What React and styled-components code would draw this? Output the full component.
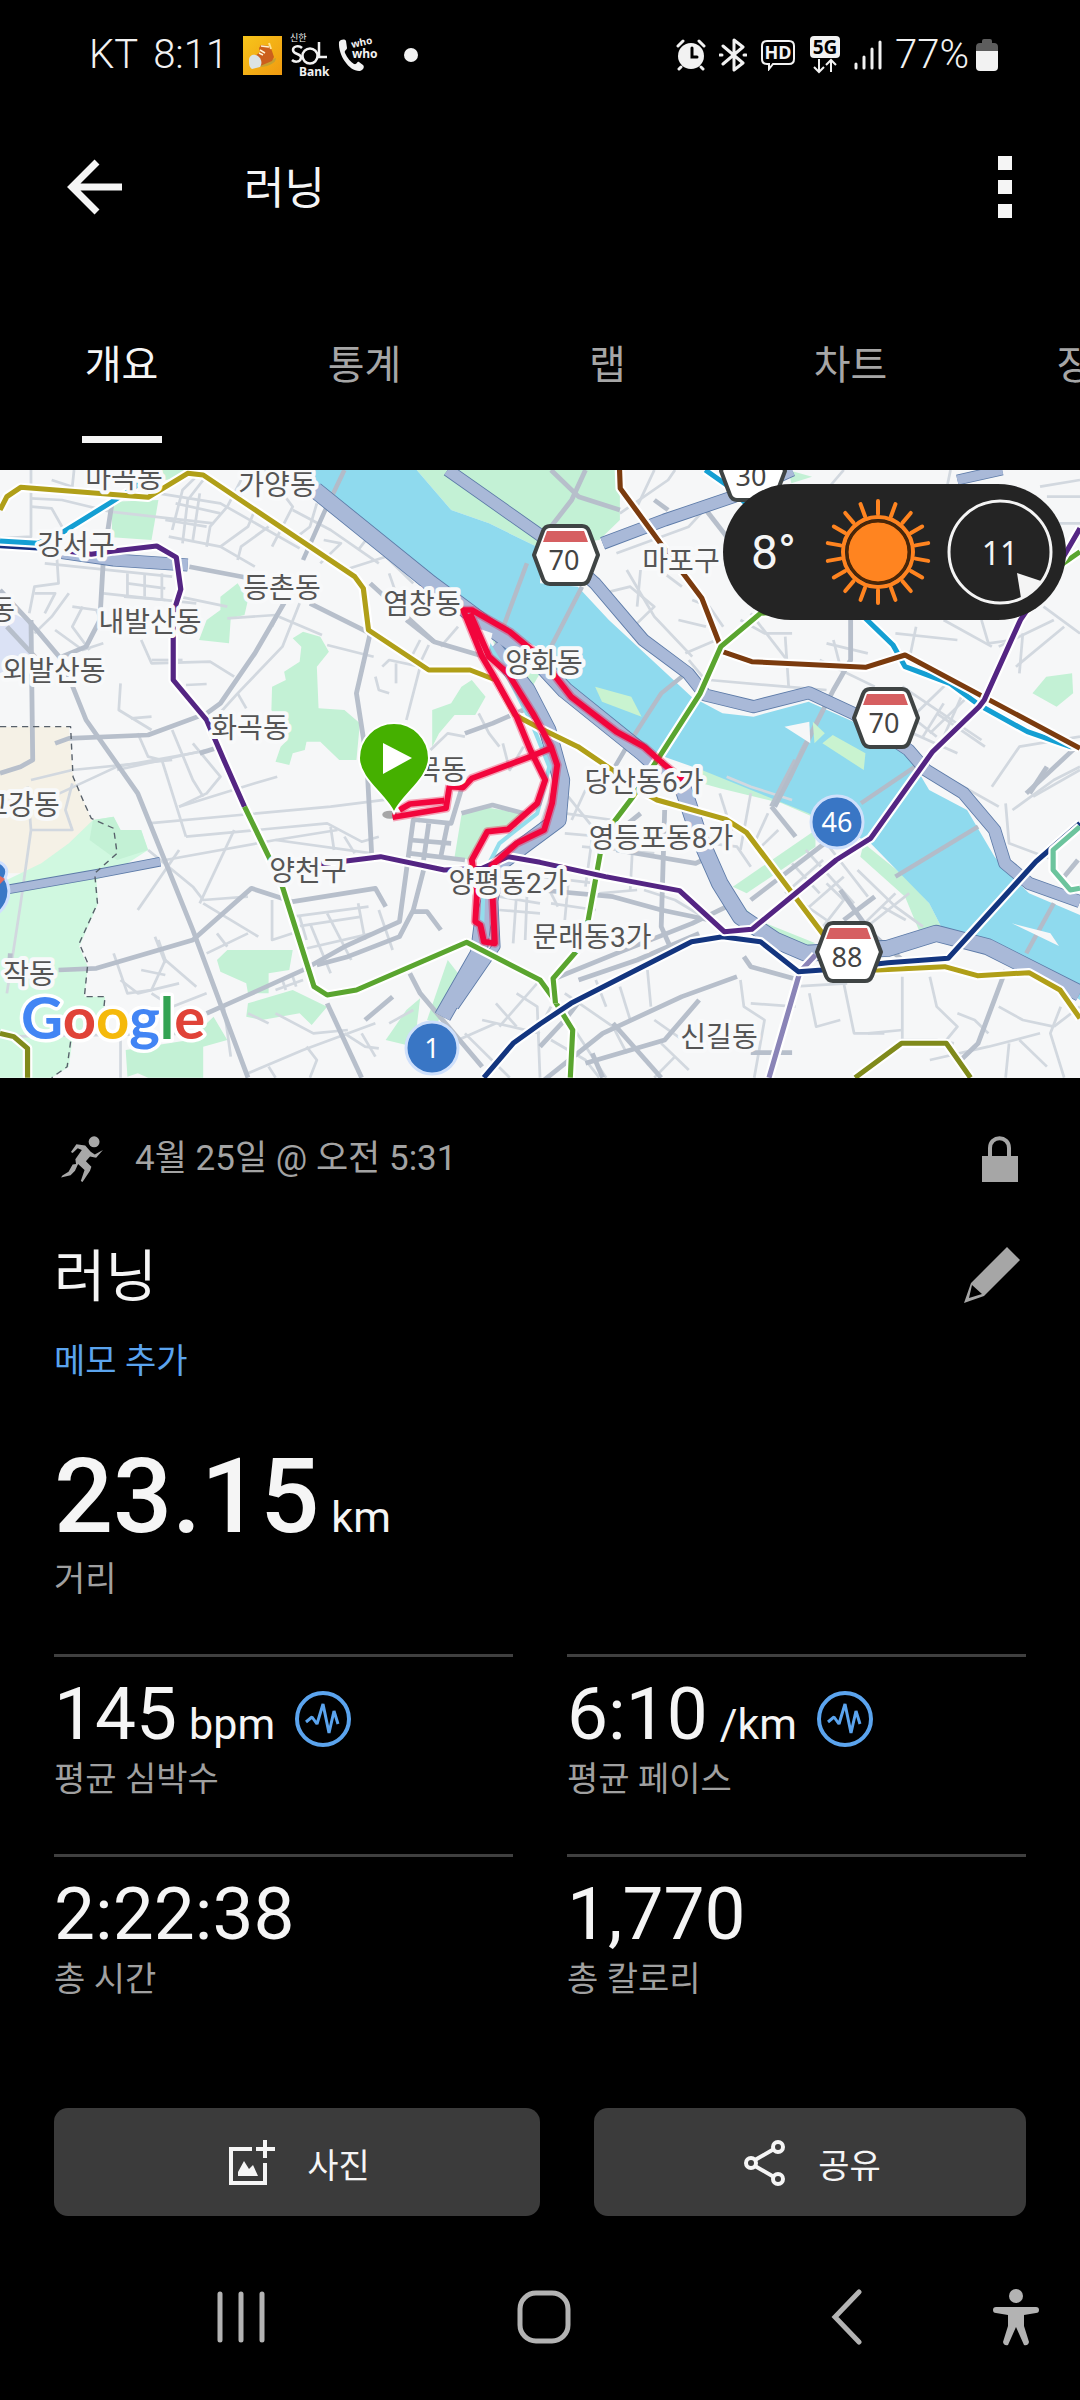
import React from "react";
//Styling
import styled, { createGlobalStyle } from "styled-components";

//Map data, in terrain units (3136 x 1824)
const parks = [
  "1210,30 1800,30 1800,180 1740,240 1568,265 1420,190 1310,150",
  "325,125 460,120 440,240 325,232",
  "470,30 560,30 540,50 480,60",
  "640,410 690,370 720,420 710,465 670,475 665,550 578,540 600,480 640,450",
  "850,535 880,515 930,530 955,575 920,620 925,745 1000,750 1045,790 1035,900 985,900 930,845 890,845 885,870 850,880 840,915 800,905 815,860 835,840 788,750 790,680 830,660 825,635 870,605 875,560",
  "1255,750 1310,730 1340,680 1370,660 1410,710 1380,765 1320,765 1275,820 1255,860",
  "630,1500 660,1470 850,1470 840,1530 780,1540 780,1600 720,1600 715,1570 640,1535",
  "720,1630 850,1590 950,1640 905,1695 870,1660 760,1680 715,1670",
  "620,1670 660,1740 590,1760 590,1853 430,1853 400,1840 370,1850 365,1770 550,1740",
  "1180,1650 1220,1615 1210,1700 1180,1755 1120,1740",
  "1340,1065 1400,1040 1520,1060 1500,1100 1420,1105 1365,1200 1320,1190",
  "2038,910 2170,960 2370,1030 2370,1075 2270,1030 2090,985 2038,970",
  "2508,1150 2628,1250 2698,1330 2733,1400 2668,1410 2628,1310 2498,1190",
  "2128,1280 2368,1110 2368,1160 2168,1300",
  "2148,1330 2200,1380 2368,1450 2328,1460 2188,1400",
  "2288,30 2358,50 2298,70",
  "2998,700 3038,650 3113,640 3116,700 3068,740",
  "1600,640 1668,690 1850,850 1900,890 1860,870 1660,720",
  "1430,540 1568,640 1540,690 1450,590",
  "1300,1500 1330,1540 1270,1690 1240,1680",
];

const lightParks = [
  "0,1270 120,1210 200,1150 270,1080 330,1070 350,1110 410,1110 430,1170 340,1230 280,1260 285,1330 230,1460 255,1520 245,1610 305,1610 300,1690 210,1740 200,1820 150,1853 0,1853",
];

const islands = [
  "1728,680 1833,710 1863,770 1748,725",
  "2418,825 2513,880 2508,930 2388,850",
  "2360,785 2395,820 2365,850",
];

const sandbanks = ["2278,800 2350,785 2353,850", "2938,1390 3050,1420 3075,1458"];

const river =
  "905,30 1210,30 1310,150 1420,190 1568,265 1568,370 1678,380 1768,480 2008,710 2098,760 2188,770 2348,725 2478,785 2618,870 2658,920 2698,990 2808,1050 2888,1190 2938,1250 2988,1300 3136,1365 3136,1620 2968,1490 2818,1430 2733,1400 2698,1330 2528,1150 2348,1060 2038,930 1900,880 1850,850 1668,690 1613,640 1560,560 1440,510 1360,490 1270,385 930,100";

const streets = [
  "90,30 90,230 0,235", "90,115 180,120 320,155", "150,60 210,80 215,30", "90,140 150,145 180,200",
  "460,100 640,130 870,265", "320,155 620,190", "490,230 640,260 740,320", "500,210 530,90 570,50",
  "530,250 545,120 590,60", "560,240 580,100", "600,260 610,200 660,140 700,60", "510,130 640,160",
  "480,180 600,200", "640,260 720,200 740,150", "690,300 700,260 780,200", "850,240 900,200 920,130",
  "770,30 850,140 820,200 790,260", "850,150 960,210 1100,310", "940,240 990,250 930,310",
  "1040,270 1070,230", "1000,330 1120,290 1200,370", "1130,340 1150,400", "130,310 500,350",
  "165,290 170,370 100,380 85,460", "370,340 370,410", "420,340 420,410", "470,340 470,420",
  "370,370 480,385", "300,400 570,430", "520,410 660,440", "360,410 480,420",
  "200,400 150,470 100,520", "100,400 160,400 130,460", "210,440 280,450 300,500",
  "160,510 240,570 300,550", "240,440 210,500 260,570", "410,540 440,610 610,605 680,650",
  "440,600 530,600", "350,670 345,750 440,810", "380,775 440,770", "540,675 600,672",
  "660,475 800,465", "810,470 935,525", "820,430 790,500", "870,430 820,560 690,700 620,780",
  "690,700 715,745", "950,555 1085,590", "1110,620 1130,600 1220,620 1180,780", "1150,610 1150,670",
  "1220,540 1190,600", "1245,555 1215,620", "1090,650 1100,690 1130,700", "1280,560 1330,500",
  "500,810 560,960 590,1010", "560,850 640,950 600,1000 520,1040", "400,820 430,890 470,900 540,1130",
  "0,1060 90,1040 340,920 610,870", "90,960 210,930 500,900", "340,930 600,870", "80,980 90,1110 60,1330 20,1600",
  "90,1110 210,1110 190,1050 210,970", "520,1040 740,970 805,950", "430,1090 960,1040 1150,1015",
  "540,1130 950,1090 1050,1145 1100,1130", "480,1200 800,1140 980,1110", "430,1170 560,1280 590,1320 720,1310",
  "400,1350 500,1200 520,1170", "580,1330 680,1110", "590,1330 750,1430", "800,1140 1080,1180",
  "960,1100 970,1170", "1000,1130 1030,1180", "850,1370 1070,1340", "790,1320 790,1440 850,1420",
  "870,1370 890,1440", "860,1400 1050,1370", "900,1390 960,1540", "950,1360 1020,1500", "1040,1330 1060,1440",
  "1100,1350 1140,1470", "870,1470 1080,1420", "330,1480 370,1600 440,1590 480,1500 460,1440",
  "350,1560 400,1600 520,1570", "480,1500 570,1580", "410,1530 480,1545", "440,1600 500,1640 600,1600",
  "480,1510 450,1430", "600,1480 720,1420", "630,1420 660,1460", "800,1590 880,1560",
  "820,1560 830,1590", "850,1550 860,1580", "650,1640 670,1790", "720,1660 780,1690", "800,1660 910,1720 1010,1710",
  "720,1840 880,1770 1090,1690", "780,1820 800,1853", "890,1760 920,1800 900,1853", "1000,1720 1060,1760 1100,1765",
  "1050,1720 1090,1790", "1130,1690 1200,1650", "350,1740 350,1853", "0,1730 600,1720",
  "1350,830 1300,820 1250,870", "1390,760 1420,820 1450,860", "1460,850 1480,930 1520,860",
  "1450,1310 1568,1330", "1450,1350 1568,1360", "1500,1300 1490,1450", "1530,1310 1525,1440",
  "1450,1700 1568,1560", "1440,1630 1500,1700", "1350,1720 1480,1853", "1400,1680 1568,1720",
  "1500,1600 1560,1640 1568,1853", "1330,1740 1440,1690", "1600,1000 1568,1100", "1640,1120 1860,1140",
  "1650,1010 1720,1100", "1700,990 1660,1080", "1640,1060 1780,1080", "1720,1130 1700,1280", "1840,1100 1830,1290",
  "1570,1250 1730,1270", "1590,1280 1620,1340", "1650,1270 1640,1380", "1740,1300 1850,1290",
  "1600,1330 1730,1350", "1870,1290 1960,1320 2040,1370", "1690,1160 1900,1180", "2110,950 2180,980 2300,1020",
  "2090,1000 2130,1130", "2180,1000 2150,1170", "2230,1060 2190,1150", "2060,1150 2140,1160 2180,1220",
  "2260,1110 2210,1160", "2400,1150 2460,1230 2520,1310", "2430,1210 2500,1140", "2300,1210 2380,1300",
  "2340,1170 2480,1330", "2330,1330 2400,1380", "2400,1270 2450,1320 2390,1400", "2490,1230 2600,1340 2680,1400",
  "2280,1300 2390,1200", "2350,1340 2450,1250", "2530,1390 2640,1300", "2500,1400 2600,1300",
  "2560,1340 2630,1380", "1600,1640 1568,1700", "1640,1600 1780,1700 1820,1780", "1730,1560 1760,1640",
  "1600,1740 1700,1800 1740,1853", "1650,1680 1760,1853", "1800,1580 1830,1680", "1880,1530 1890,1640",
  "1900,1680 2010,1760", "1920,1750 2000,1830", "1960,1790 1900,1853", "2150,1560 2160,1640 2220,1680 2190,1853",
  "2180,1630 2310,1640", "2300,1580 2460,1570", "2350,1600 2370,1700 2440,1680", "2450,1570 2480,1720 2568,1720",
  "2620,1550 2620,1740 2720,1740 2770,1750", "2700,1550 2720,1640 2780,1700 2740,1750", "2520,1720 2620,1710",
  "2780,1660 2830,1680 2870,1720", "2900,1640 2970,1680 3060,1700", "2700,1800 2870,1760 3020,1720",
  "2930,1750 2920,1853", "3080,1640 3050,1720 3090,1853", "3060,1700 3136,1640", "2960,1740 3040,1820",
  "1800,160 1940,60 1960,30", "1850,140 1900,30", "1790,280 2000,200 2080,110", "1820,330 1900,470 2010,590",
  "1750,400 1830,380 1900,440 1840,500", "1860,330 1850,440", "1740,380 1760,430 1880,560", "1890,310 1980,380",
  "2010,420 2060,440 2100,500", "1970,480 2050,500", "1990,580 2080,540", "2000,600 2040,650",
  "2060,660 2280,680 2400,690", "2150,480 2220,520 2300,520", "2280,530 2290,680", "2180,460 2300,620",
  "2400,550 2520,580", "2380,600 2540,680", "2420,540 2440,620", "2600,520 2780,540", "2660,500 2640,600",
  "2740,480 2880,560", "2850,480 2870,550 2940,540", "2900,560 3060,480", "3030,440 3136,520",
  "2950,620 3090,500", "2970,520 2960,640", "2560,700 2720,830", "2620,680 2850,840", "2640,780 2760,660",
  "2700,820 2820,700", "2650,820 2780,880", "2720,760 2860,860", "2740,730 2680,830", "2800,690 2740,830",
  "2450,30 2400,90", "2760,30 2750,80", "3020,80 3136,60", "3040,110 3136,110", "3000,190 3136,190",
  "2880,980 2960,860 3136,830", "2940,1050 3060,960 3136,920", "2920,1030 2930,1150 3060,1200", "2780,970 2900,1040",
  "3000,1010 3136,930",
];

const arterials = [
  "325,130 300,300 290,480 250,560 180,590", "90,480 95,900 60,920 0,940", "0,390 90,490 180,600 250,780 400,1000 560,1410 720,1853",
  "20,500 110,600", "550,320 710,352", "900,430 1075,520 1035,700 1065,900 1080,1200", "1075,370 1260,545 1440,600",
  "830,420 740,580 640,730 600,760", "160,850 200,835 430,825 600,760", "580,880 640,860", "1180,480 1260,545",
  "170,1530 280,1525 560,1440 730,1285 850,1325 1090,1285 1120,1340", "600,1660 720,1605 880,1530 1000,1460 1160,1385 1200,1080 1220,1080",
  "920,1515 1010,1490 1160,1430 1200,1350 1230,1230", "950,1630 1050,1853", "30,1480 25,1560", "1190,1540 1220,1600 1400,1820",
  "1215,1080 1310,1090 1345,970", "1245,1090 1230,1200", "1300,1090 1280,1190", "1190,1180 1350,1200", "1190,1140 1310,1150",
  "1340,1060 1430,1035 1520,1060", "1200,1355 1240,1355 1280,1410", "1350,820 1430,790 1520,750", "1060,1680 1140,1610",
  "1600,1560 1790,1480 2010,1390 2110,1340", "1680,1560 1850,1500 2030,1420", "1568,1290 1780,1310 1920,1350 2060,1380",
  "1790,1170 2020,1210 2060,1190", "1930,1050 1920,1400 1950,1470", "2240,1040 2310,1130", "2180,1320 2420,1130",
  "2310,900 2240,1040", "2440,1290 2530,1420 2620,1500", "2450,1380 2540,1310", "1568,1870 1750,1720 1980,1610 2140,1550",
  "1700,1810 1930,1740 2030,1620", "1720,1780 1750,1853", "1780,1690 1920,1853", "2160,1490 2180,1520 2320,1560",
  "2470,480 2470,600 2420,690 2330,870 2290,960", "1600,30 1680,110 1800,150", "1700,30 1660,120 1600,200",
  "2050,150 2110,230", "2920,1530 2840,1750 2790,1800", "2980,1000 3136,850", "1800,1110 1860,1060", "2180,1778 2300,1778",
  "1568,1760 1640,1680 1700,1600", "3090,1250 3130,1200", "1900,120 1940,150", "2990,1000 3040,920",
];

const bridges = [
  "1000,30 940,160 880,300", "1530,310 1440,560", "1690,380 1600,560", "1980,650 1920,700 1820,860 1780,930",
  "2390,750 2290,960 2250,1040", "2500,1030 2700,890", "2600,1250 2840,1100", "3060,1330 2980,1480",
];

const highways = [
  { points: "915,90 1250,370 1420,500 1568,610 1640,690 1868,880 1985,990 2030,1130 2090,1270 2150,1370 2250,1440 2340,1480 2578,1465 2718,1420 2868,1460 3136,1600", width: 46 },
  { points: "1300,30 1568,225 1640,290 1728,370 1868,540 1998,640 2048,705 2188,740 2348,698 2478,760 2638,870 2688,930 2798,1000 2888,1110 2918,1210 2988,1270 3136,1325", width: 34 },
  { points: "1750,250 1930,180 2130,110 2300,30", width: 34 },
  { points: "2780,60 2910,30", width: 28 },
  { points: "1430,560 1530,690 1590,810 1630,960 1620,1080 1450,1210 1400,1400 1390,1480 1285,1670", width: 46 },
  { points: "1430,1240 1440,1460 1320,1640", width: 22 },
  { points: "25,1288 290,1240 465,1205", width: 24 },
  { points: "180,278 330,300 545,315", width: 34 },
];

const subways = [
  { color: "#172f80", points: "0,257 110,264" },
  { color: "#149fd3", points: "0,243 110,250 185,215 380,90 430,50" },
  { color: "#149fd3", points: "2048,30 2110,75 2518,480 2593,555 2628,620 2758,670 2843,735 2983,815 3108,860 3136,858" },
  { color: "#7b3b0e", points: "1799,30 1801,85 1918,250 2038,415 2098,575 2183,605 2513,622 2628,585 3136,865" },
  { color: "#b09f18", points: "0,150 20,110 60,82 430,112 545,40 590,45 1030,350 1055,385 1070,510 1245,630 1365,630 1440,660 1495,765 1568,805 1678,860 1778,930 1838,980 1908,1020 2108,1078 2168,1118 2388,1420 2460,1530 2548,1530 2743,1520 2838,1547 2988,1538 3078,1590 3136,1675" },
  { color: "#542583", points: "110,262 265,283 330,273 455,258 512,292 525,388 503,460 503,660 600,780 650,900 710,1040" },
  { color: "#5aa52f", points: "710,1040 785,1200 820,1280 912,1580 950,1605 1035,1590 1355,1447 1568,1560 1603,1610 1663,1710 1656,1853" },
  { color: "#5aa52f", points: "1613,1630 1606,1555 1673,1475 1708,1380 1743,1180 1783,1085 1838,1010 1918,885 2033,700 2093,560 2208,460 2700,420 3088,310 3136,275" },
  { color: "#8a84b7", points: "2368,1485 2323,1535 2233,1853" },
  { color: "#13357f", points: "1405,1853 1490,1750 1568,1692 1658,1630 2008,1445 2098,1430 2208,1445 2318,1535 2388,1530 2578,1508 2753,1495 3008,1205 3136,1090" },
  { color: "#542583", points: "3136,205 3088,290 2963,480 2858,720 2843,740 2708,875 2528,1135 2428,1200 2183,1408 2103,1415 1973,1292 1758,1250 1568,1207 1475,1190 1400,1225 1290,1230 1105,1190 1005,1203 800,1225" },
  { color: "#808a1b", points: "2483,1853 2618,1750 2748,1750 2818,1853" },
  { color: "#808a1b", points: "0,1720 40,1730 80,1765 80,1853" },
  { color: "#6cc49d", points: "3136,1100 3058,1170 3058,1230 3108,1290 3136,1285" },
];

const borders = [
  "0,800 205,800 212,950 245,1030 265,1075 330,1105 340,1180 275,1240 283,1330 230,1450 255,1510 245,1610 305,1610 300,1660",
  "205,1745 195,1820 150,1853",
];

const track = [
  "1985,960 1930,915 1870,860 1790,815 1658,710 1613,650 1568,590 1480,515 1370,450 1345,450 1400,590 1440,660 1500,770 1540,870 1583,960 1560,1030 1475,1108 1415,1115 1370,1200 1385,1300 1380,1385 1395,1395 1405,1445 1437,1450 1430,1300 1430,1215 1500,1150 1580,1110 1603,1030 1618,915 1600,860 1550,765 1475,640 1420,590 1365,460",
  "1140,1072 1295,1045 1305,980 1345,982 1370,955 1540,890 1598,865",
  "1160,1050 1190,1032 1290,1022",
];

//Labels and badges, in map pixels
const places = [
  { name: "마곡동", x: 124, y: 18 },
  { name: "가양동", x: 277, y: 25 },
  { name: "강서구", x: 76, y: 85 },
  { name: "등촌동", x: 282, y: 128 },
  { name: "염창동", x: 422, y: 144 },
  { name: "내발산동", x: 150, y: 162 },
  { name: "외발산동", x: 54, y: 211 },
  { name: "동", x: 2, y: 150 },
  { name: "화곡동", x: 250, y: 268 },
  { name: "목동", x: 441, y: 310 },
  { name: "양화동", x: 544, y: 203 },
  { name: "마포구", x: 681, y: 101 },
  { name: "당산동6가", x: 644, y: 322 },
  { name: "영등포동8가", x: 661, y: 378 },
  { name: "양평동2가", x: 508, y: 423 },
  { name: "문래동3가", x: 592, y: 477 },
  { name: "신길동", x: 719, y: 577 },
  { name: "양천구", x: 308, y: 411 },
  { name: "고강동", x: 21, y: 345 },
  { name: "작동", x: 29, y: 514 },
];

const shields = [
  { number: 70, x: 566, y: 85 },
  { number: 30, x: 753, y: 1 },
  { number: 70, x: 886, y: 248 },
  { number: 88, x: 849, y: 482 },
];

const routes = [
  { number: 1, x: 432, y: 578 },
  { number: 46, x: 837, y: 352 },
];

const tabs = ["개요", "통계", "랩", "차트", "장비"];

const stats = [
  { value: "145", unit: "bpm", label: "평균 심박수", chart: true },
  { value: "6:10", unit: "/km", label: "평균 페이스", chart: true },
  { value: "2:22:38", label: "총 시간" },
  { value: "1,770", label: "총 칼로리" },
];

const StatusBar = () => (
  <Status>
    <StatusGroup>
      <StatusText>KT</StatusText>
      <StatusText>8:11</StatusText>
      <svg width="39" height="39" viewBox="0 0 39 39" aria-hidden="true">
        <defs>
          <linearGradient id="gold" x1="0" y1="0" x2="1" y2="1">
            <stop offset="0" stopColor="#f7c51b" />
            <stop offset="1" stopColor="#f09a10" />
          </linearGradient>
        </defs>
        <rect width="39" height="39" fill="url(#gold)" />
        <path d="M13 30 27 24 33 22C33 27 26 30 19 31Z" fill="#c7a02e" />
        <path d="M16 12 18 9 27 10 29 15 31 21 29 25 17 30 12 20 17 16Z" fill="#cc5f1c" />
        <path d="M18 10 26 11M17 14 22 17M16 17 20 19" stroke="#fff2d5" strokeWidth="1.5" />
        <path d="M26 7 28 13" stroke="#ffe28f" strokeWidth="2" />
        <path d="M6 24C6 19 12 17 16 21 19 24 19 28 17 31L9 33C6 31 6 28 6 24Z" fill="#dce3e4" />
      </svg>
      <svg width="40" height="54" viewBox="0 -5 40 54" fill="#f2f2f2" aria-hidden="true">
        <SmallText x="0" y="8" fontSize="9">신한</SmallText>
        <path d="M12 15C9 12 3 13 3 17 3 22 12 20 11 25 10 30 4 29 2 27" fill="none" stroke="#f2f2f2" strokeWidth="2.5" />
        <circle cx="20" cy="23" r="7.5" fill="none" stroke="#f2f2f2" strokeWidth="2.5" />
        <path d="M29 9V24H37" fill="none" stroke="#f2f2f2" strokeWidth="2.5" />
        <SmallText x="9" y="43" fontSize="12" fontWeight="700">Bank</SmallText>
      </svg>
      <svg width="42" height="44" viewBox="0 -2 42 44" fill="#f2f2f2" aria-hidden="true">
        <path d="M1 7C3 4 7 4 8 6L9 13C9 15 6 15 7 18 9 23 13 27 16 29 19 30 19 26 21 27L25 30C27 32 25 35 22 36 12 37 0 21 1 7Z" />
        <SmallText x="14" y="13" fontSize="10" fontWeight="700" transform="rotate(-12 14 13)">who</SmallText>
        <SmallText x="14" y="23" fontSize="12" fontWeight="700">who</SmallText>
      </svg>
      <Dot />
    </StatusGroup>
    <StatusGroup $tight>
      <svg width="30" height="32" viewBox="0 0 30 32" fill="none" stroke="#f2f2f2" strokeLinecap="round" aria-hidden="true">
        <circle cx="15" cy="17" r="13" fill="#f2f2f2" stroke="none" />
        <path d="M2 7 7 2M23 2 28 7M5 28 3 30M25 28 27 30" strokeWidth="3" />
        <path d="M16 9V18H21" stroke="#000" strokeWidth="3" />
      </svg>
      <svg width="28" height="34" viewBox="0 0 28 34" fill="none" stroke="#f2f2f2" strokeWidth="3" strokeLinejoin="round" strokeLinecap="round" aria-hidden="true">
        <path d="M4 8 24 25 15 32V2L24 9 4 26" />
        <path d="M1 17H3M25 17H27" />
      </svg>
      <svg width="36" height="32" viewBox="0 0 36 32" fill="none" aria-hidden="true">
        <path d="M7 2H29Q34 2 34 7V20Q34 25 29 25H13L9 30V25H7Q2 25 2 20V7Q2 2 7 2Z" stroke="#f2f2f2" strokeWidth="2" />
        <SmallText x="18" y="20" fontSize="18" fontWeight="700" textAnchor="middle" fill="#f2f2f2">HD</SmallText>
      </svg>
      <svg width="32" height="46" viewBox="0 -4 32 46" aria-hidden="true">
        <rect x="1" width="30" height="22" rx="4" fill="#f2f2f2" />
        <SmallText x="16" y="18" fontSize="19" fontWeight="700" textAnchor="middle" fill="#000">5G</SmallText>
        <path d="M10 23V35M5 31 10 36 15 31M22 36V25M17 29 22 24 27 29" fill="none" stroke="#f2f2f2" strokeWidth="2" />
      </svg>
      <svg width="28" height="32" viewBox="0 0 28 32" fill="none" stroke="#f2f2f2" strokeWidth="3" strokeLinecap="round" aria-hidden="true">
        <path d="M2 25V29M10 18V29M18 10V29M26 3V29" />
      </svg>
      <Battery>
        <StatusText>77%</StatusText>
        <svg width="22" height="32" viewBox="0 0 22 32" aria-hidden="true">
          <path d="M0 12V8Q0 4 4 4H6V2Q6 0 8 0H14Q16 0 16 2V4H18Q22 4 22 8V12Z" fill="#5d5d5d" />
          <path d="M0 12H22V28Q22 32 18 32H4Q0 32 0 28Z" fill="#f2f2f2" />
        </svg>
      </Battery>
    </StatusGroup>
  </Status>
);

const Terrain = () => (
  <svg width="1080" height="608" viewBox="0 30 3136 1824" preserveAspectRatio="none" fill="none" strokeLinejoin="round">
    <polygon points="0,800 200,800 212,950 245,1030 270,1090 190,1200 90,1240 0,1240" fill="#f5f1e6" />
    <polygon points="0,440 95,490 90,590 0,640" fill="#dbe2f5" />
    {parks.map((points) => <polygon key={points} points={points} fill="#c3f1d5" />)}
    {lightParks.map((points) => <polygon key={points} points={points} fill="#d0f8e0" />)}
    <polygon points="270,1080 330,1070 350,1110 410,1110 430,1170 340,1200 260,1140" fill="#c3f1d5" />
    <polygon points={river} fill="#8fdaee" />
    <g stroke="#d2d8df" strokeWidth="8">
      {streets.map((points) => <polyline key={points} points={points} />)}
    </g>
    <g stroke="#b7bfcb" strokeWidth="14">
      {arterials.map((points) => <polyline key={points} points={points} />)}
    </g>
    <g stroke="#b3bcc9" strokeWidth="13">
      {bridges.map((points) => <polyline key={points} points={points} />)}
    </g>
    {islands.map((points) => <polygon key={points} points={points} fill="#c9f3d0" />)}
    {sandbanks.map((points) => <polygon key={points} points={points} fill="#f6f7f8" />)}
    <g stroke="#5d7ba8">
      {highways.map(({ points, width }) => <polyline key={points} points={points} strokeWidth={width + 5} />)}
    </g>
    <g stroke="#a9b9d8">
      {highways.map(({ points, width }) => <polyline key={points} points={points} strokeWidth={width} />)}
    </g>
    <polyline points="1400,520 1470,640 1540,780 1595,920 1560,1060 1450,1150 1405,1240 1400,1400" stroke="#93ddec" strokeWidth="12" />
    <polygon points="1375,500 1430,520 1420,570" fill="#f6f7f8" />
    {borders.map((points) => (
      <polyline key={points} points={points} stroke="#57606a" strokeWidth="4" strokeDasharray="18 14" />
    ))}
    {subways.map(({ points, color }) => (
      <g key={points}>
        <polyline points={points} stroke="#fff" strokeWidth="28" />
        <polyline points={points} stroke={color} strokeWidth="15" />
      </g>
    ))}
    <ellipse cx="1132" cy="1064" rx="22" ry="12" fill="#555" opacity="0.5" />
    <g stroke="#f2053c">
      {track.map((points) => (
        <g key={points}>
          <polyline points={points} strokeWidth="26" opacity="0.35" />
          <polyline points={points} strokeWidth="17" />
        </g>
      ))}
    </g>
  </svg>
);

const RouteMap = () => (
  <MapArea>
    <MapDrawing viewBox="0 0 1080 608" role="img" aria-label="지도">
      <Terrain />
      <g>
        <path d="M-20 102C4 98 10 108 5 118 14 132 8 156-20 160Z" transform="translate(0 290)" fill="#3a78c6" stroke="#cfe0ff" strokeWidth="3" />
        <path d="M0 406 5 409 0 414Z" fill="#e26b60" />
      </g>
      {places.map(({ name, x, y }) => (
        <PlaceName key={name} x={x} y={y}>{name}</PlaceName>
      ))}
      {shields.map(({ number, x, y }) => (
        <g key={`${number}-${x}`} transform={`translate(${x} ${y})`}>
          <path
            d="M-32 0-23-24Q-21-29-16-29H16Q21-29 23-24L32 0 23 24Q21 29 16 29H-16Q-21 29-23 24Z"
            fill="#fff" stroke="#3f4444" strokeWidth="4" strokeLinejoin="round"
          />
          <path d="M-19-24H18L22-13H-23Z" fill="#d65f61" />
          <BadgeNumber x="-2" y="15" fill="#444">{number}</BadgeNumber>
        </g>
      ))}
      {routes.map(({ number, x, y }) => (
        <g key={number} transform={`translate(${x} ${y})`}>
          <circle r="26" fill="#3976c5" stroke="#cfe0fb" strokeWidth="3" />
          <BadgeNumber y="10" fill="#fff">{number}</BadgeNumber>
        </g>
      ))}
      <path d="M394 343C386 325 359 309 359 288A35 35 0 0 1 429 288C429 309 402 325 394 343Z" fill="#45b000" stroke="#fff" strokeWidth="2" />
      <path d="M383 273 412 288 383 304Z" fill="#fff" />
      <Logo x="21" y="569">
        <tspan fill="#4285f4">G</tspan>
        <tspan fill="#e04338">o</tspan>
        <tspan fill="#f5b90b">o</tspan>
        <tspan fill="#4285f4">g</tspan>
        <tspan fill="#34a353">l</tspan>
        <tspan fill="#e04338">e</tspan>
      </Logo>
    </MapDrawing>
    <Weather>
      <Temperature>8°</Temperature>
      <svg width="106" height="110" viewBox="-53 -55 106 110" fill="none" stroke="#ff8420" strokeWidth="4" strokeLinecap="round" aria-hidden="true">
        <circle r="30" fill="#ff8420" stroke="none" />
        <circle r="35" />
        <circle r="31" stroke="#4a2607" strokeWidth="3" />
        {Array.from({ length: 18 }, (_, i) => (
          <path key={i} d="M0-38V-51" transform={`rotate(${i * 20})`} />
        ))}
      </svg>
      <svg width="106" height="106" viewBox="-53 -53 106 106" aria-hidden="true">
        <circle r="51" fill="none" stroke="#f4f4f4" strokeWidth="3" />
        <path d="M17 21 41 29Q35 41 21 46Z" fill="#f4f4f4" />
        <WindSpeed y="13">11</WindSpeed>
      </svg>
    </Weather>
  </MapArea>
);

const ChartBadge = () => (
  <ChartButton type="button" aria-label="차트 보기">
    <svg width="58" height="58" viewBox="0 0 58 58" fill="none" stroke="#5ba4ee" strokeWidth="3">
      <circle cx="29" cy="29" r="26" strokeWidth="4" />
      <path d="M12 32 18 27 23 34 29 14 35 43 40 21 44 34" strokeLinejoin="bevel" />
    </svg>
  </ChartButton>
);

const App = () => {
  return (
    <>
      <GlobalStyle />
      <Screen>
        <StatusBar />
        <AppBar>
          <IconButton type="button" aria-label="뒤로">
            <svg width="56" height="56" viewBox="0 0 56 56" fill="none" stroke="#f5f5f5" strokeWidth="7">
              <path d="M30 3 5 28 30 53M5 28H55" />
            </svg>
          </IconButton>
          <PageTitle>러닝</PageTitle>
          <IconButton type="button" aria-label="더보기">
            <svg width="14" height="62" viewBox="0 0 14 62" fill="#f5f5f5">
              <path d="M0 0H14V14H0ZM0 24H14V38H0ZM0 48H14V62H0Z" />
            </svg>
          </IconButton>
        </AppBar>
        <Tabs role="tablist">
          {tabs.map((tab, i) => (
            <Tab key={tab} type="button" role="tab" aria-selected={i === 0} $active={i === 0}>
              <span>{tab}</span>
            </Tab>
          ))}
        </Tabs>
        <RouteMap />
        <Details>
          <MetaRow>
            <svg width="42" height="46" viewBox="177 108 123 135" fill="#a8a8a8" aria-hidden="true">
              <circle cx="274" cy="125" r="16" />
              <path d="M206 155 222 132 248 136 264 154 276 162 300 149 280 172 262 168 250 182 266 198 262 210 240 243 235 240 246 208 227 190 218 210 205 223 177 230 181 224 199 213 211 192 221 190 219 176 238 149 226 144 211 158Z" />
            </svg>
            <DateText>4월 25일 @ 오전 5:31</DateText>
            <svg width="36" height="46" viewBox="0 0 36 46" aria-hidden="true">
              <path d="M0 20H36V46H0Z" fill="#a6a6a6" />
              <path d="M8 21V12C8-1 27-1 27 12V21" fill="none" stroke="#a6a6a6" strokeWidth="4" />
            </svg>
          </MetaRow>
          <TitleRow>
            <ActivityTitle>러닝</ActivityTitle>
            <IconButton type="button" aria-label="이름 수정">
              <svg width="56" height="56" viewBox="0 0 56 56">
                <path fill="#a6a6a6" fillRule="evenodd" d="M43 0 56 13 20 49 0 56 7 36ZM8 38 5 51 18 47Z" />
              </svg>
            </IconButton>
          </TitleRow>
          <NoteLink href="#note">메모 추가</NoteLink>
          <Distance>
            <strong>23.15</strong>
            <Unit>km</Unit>
          </Distance>
          <Label>거리</Label>
          <Stats>
            {stats.map(({ value, unit, label, chart }) => (
              <Stat key={label}>
                <StatLine>
                  <StatValue>{value}</StatValue>
                  {unit && <Unit>{unit}</Unit>}
                  {chart && <ChartBadge />}
                </StatLine>
                <Label>{label}</Label>
              </Stat>
            ))}
          </Stats>
          <Actions>
            <ActionButton type="button">
              <svg width="46" height="46" viewBox="0 0 46 46" fill="none" stroke="#f5f5f5" strokeWidth="4">
                <path d="M23 9H2V43H36V23M36 0V18M27 9H46" />
                <path d="M9 36V32L15 21 20 29 24 25 29 36Z" fill="#f5f5f5" stroke="none" />
              </svg>
              사진
            </ActionButton>
            <ActionButton type="button">
              <svg width="42" height="46" viewBox="0 0 42 46" fill="none" stroke="#f5f5f5" strokeWidth="4">
                <path d="M11 20 30 9M11 26 30 37" />
                <circle cx="7" cy="23" r="5" />
                <circle cx="34" cy="7" r="5" />
                <circle cx="34" cy="39" r="5" />
              </svg>
              공유
            </ActionButton>
          </Actions>
        </Details>
        <NavBar>
          <IconButton type="button" aria-label="최근 앱">
            <svg width="50" height="52" viewBox="0 0 50 52" stroke="#b3b3b3" strokeWidth="5" strokeLinecap="round">
              <path d="M4 3V49M25 3V49M46 3V49" />
            </svg>
          </IconButton>
          <IconButton type="button" aria-label="홈">
            <svg width="54" height="54" viewBox="0 0 54 54" fill="none" stroke="#b3b3b3" strokeWidth="5">
              <rect x="3" y="3" width="48" height="48" rx="16" />
            </svg>
          </IconButton>
          <IconButton type="button" aria-label="이전">
            <svg width="32" height="56" viewBox="0 0 32 56" fill="none" stroke="#b3b3b3" strokeWidth="5" strokeLinecap="round">
              <path d="M28 3 4 28 28 53" />
            </svg>
          </IconButton>
          <IconButton type="button" aria-label="접근성">
            <svg width="46" height="58" viewBox="0 0 46 58" fill="#b3b3b3">
              <circle cx="23" cy="8" r="7" />
              <path d="M3 19H43Q46 19 46 22 46 25 43 25L31 27V38L36 54Q35 58 31 57L23 39 15 57Q11 58 10 54L15 38V27L3 25Q0 25 0 22 0 19 3 19Z" />
            </svg>
          </IconButton>
        </NavBar>
      </Screen>
    </>
  );
};

const GlobalStyle = createGlobalStyle`
  * {
    box-sizing: border-box;
    margin: 0;
    padding: 0;
  }
  body {
    background: #000;
    color: #f5f5f5;
    font-family: Roboto, "Noto Sans CJK KR", sans-serif;
  }
  button {
    background: none;
    border: none;
    color: inherit;
    font: inherit;
    cursor: pointer;
  }
  svg {
    display: block;
    flex-shrink: 0;
  }
`;

const Screen = styled.main`
  min-height: 100vh;
  overflow-x: hidden;
`;

const Status = styled.div`
  display: flex;
  align-items: center;
  justify-content: space-between;
  height: 110px;
  padding: 0 82px 0 89px;
`;

const StatusGroup = styled.div`
  display: flex;
  align-items: center;
  gap: ${({ $tight }) => ($tight ? "13px" : "8px")};
`;

const StatusText = styled.span`
  margin-right: 7px;
  color: #f2f2f2;
  font-size: 40px;
  font-weight: 300;
  line-height: 48px;
`;

const SmallText = styled.text`
  font-family: "Noto Sans", "Noto Sans CJK KR", sans-serif;
`;

const Dot = styled.i`
  width: 14px;
  height: 14px;
  margin-left: 16px;
  border-radius: 50%;
  background: #f2f2f2;
`;

const Battery = styled.div`
  display: flex;
  align-items: center;
`;

const AppBar = styled.header`
  display: flex;
  align-items: center;
  height: 176px;
  padding: 0 68px 22px 67px;
`;

const IconButton = styled.button`
  display: flex;
  align-items: center;
  justify-content: center;
`;

const PageTitle = styled.h1`
  flex: 1;
  margin-left: 121px;
  padding-top: 4px;
  font-size: 44px;
  font-weight: 400;
  line-height: 60px;
`;

const Tabs = styled.div`
  display: flex;
  overflow: hidden;
  padding-bottom: 27px;
`;

const Tab = styled.button`
  display: flex;
  flex: 0 0 auto;
  justify-content: center;
  width: 22.5%;
  height: 157px;
  color: ${({ $active }) => ($active ? "#f5f5f5" : "#a6a6a6")};
  font-size: 40px;
  line-height: 160px;
  span {
    min-width: 80px;
    height: 157px;
    text-align: center;
    border-bottom: 7px solid ${({ $active }) => ($active ? "#f5f5f5" : "transparent")};
  }
`;

const MapArea = styled.section`
  position: relative;
`;

const MapDrawing = styled.svg`
  width: 100%;
  height: auto;
  background: #f6f7f8;
`;

const PlaceName = styled.text`
  fill: #555;
  stroke: #f8f9fa;
  stroke-width: 8px;
  stroke-linejoin: round;
  paint-order: stroke;
  text-anchor: middle;
  font-size: 28px;
`;

const BadgeNumber = styled.text`
  font-family: "Noto Sans", sans-serif;
  font-size: 27px;
  text-anchor: middle;
`;

const Logo = styled.text`
  stroke: #fff;
  stroke-width: 7px;
  stroke-linejoin: round;
  paint-order: stroke;
  font-family: Lato, sans-serif;
  font-size: 58px;
  font-weight: 700;
`;

const Weather = styled.div`
  position: absolute;
  top: 14px;
  right: 14px;
  display: flex;
  align-items: center;
  gap: 16px;
  height: 136px;
  padding: 0 13px 0 28px;
  border-radius: 68px;
  background: #242424;
`;

const Temperature = styled.span`
  width: 58px;
  padding-top: 2px;
  font-size: 48px;
  line-height: 60px;
`;

const WindSpeed = styled.text`
  fill: #f4f4f4;
  font-family: "Noto Sans", sans-serif;
  font-size: 32px;
  text-anchor: middle;
`;

const Details = styled.section`
  padding: 24px 54px 0;
`;

const MetaRow = styled.div`
  display: flex;
  align-items: center;
  height: 114px;
  padding: 0 8px 0 7px;
`;

const DateText = styled.p`
  flex: 1;
  margin-left: 32px;
  color: #a3a3a3;
  font-size: 35px;
  line-height: 50px;
`;

const TitleRow = styled.div`
  display: flex;
  align-items: center;
  justify-content: space-between;
  height: 118px;
  padding-right: 6px;
`;

const ActivityTitle = styled.h2`
  padding-top: 4px;
  font-size: 56px;
  font-weight: 400;
  line-height: 80px;
`;

const NoteLink = styled.a`
  display: inline-block;
  padding-top: 2px;
  color: #5ba4ee;
  font-size: 34px;
  line-height: 50px;
  text-decoration: none;
`;

const Distance = styled.p`
  display: flex;
  align-items: baseline;
  margin: 59px 0 4px;
  font-size: 104px;
  line-height: 104px;
  strong {
    font-weight: 500;
  }
`;

const Unit = styled.span`
  margin-left: 12px;
  font-size: 43px;
  line-height: 50px;
`;

const Label = styled.p`
  padding-top: 1px;
  color: #a0a0a0;
  font-size: 34px;
  line-height: 50px;
`;

const Stats = styled.div`
  display: grid;
  grid-template-columns: 1fr 1fr;
  column-gap: 54px;
  margin-top: 50px;
`;

const Stat = styled.div`
  height: 200px;
  padding-top: 20px;
  border-top: 3px solid #404040;
`;

const StatLine = styled.div`
  display: flex;
  align-items: baseline;
  height: 76px;
`;

const StatValue = styled.span`
  font-size: 73px;
  line-height: 74px;
`;

const ChartButton = styled.button`
  align-self: center;
  margin: 8px 0 0 19px;
`;

const Actions = styled.div`
  display: grid;
  grid-template-columns: 9fr 8fr;
  gap: 54px;
  margin-top: 54px;
`;

const ActionButton = styled.button`
  display: flex;
  align-items: center;
  justify-content: center;
  gap: 32px;
  height: 108px;
  padding: 2px 0 0 5px;
  border-radius: 14px;
  background: #3b3b3b;
  font-size: 34px;
`;

const NavBar = styled.nav`
  display: grid;
  grid-template-columns: repeat(3, 1fr) 36px;
  height: 144px;
  margin-top: 29px;
  padding: 0 46px 0 90px;
`;

export default App;
